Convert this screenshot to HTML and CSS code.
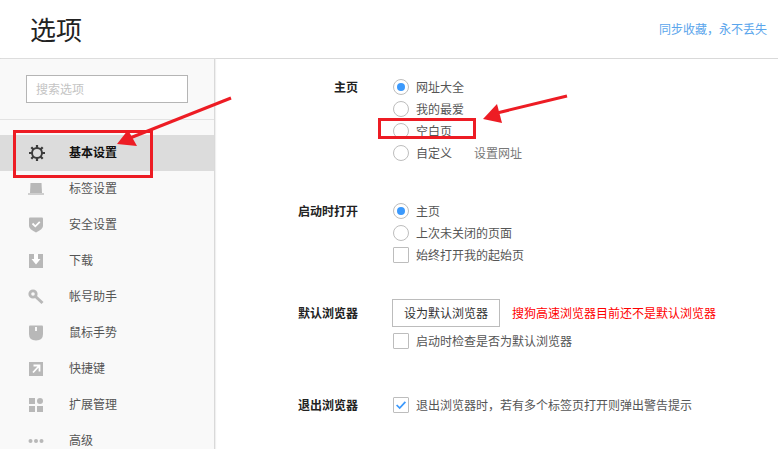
FILE: index.html
```html
<!DOCTYPE html>
<html lang="zh-CN">
<head>
<meta charset="utf-8">
<title>选项</title>
<link rel="stylesheet" href="styles.css">
</head>
<body>
<div class="page">
  <header class="header">
    <h1 class="title">选项</h1>
    <a class="sync">同步收藏，永不丢失</a>
  </header>
  <div class="body">
    <aside class="sidebar">
      <div class="search-wrap"><div class="search">搜索选项</div></div>
      <nav class="nav">
        <div class="nav-item active">
          <svg class="icon" viewBox="0 0 16 16"><circle cx="8" cy="8" r="5" fill="none" stroke="#3c3c3c" stroke-width="2"/><g stroke="#3c3c3c" stroke-width="2.2"><path d="M8 0v3M8 13v3M0 8h3M13 8h3M2.3 2.3l2.1 2.1M11.6 11.6l2.1 2.1M2.3 13.7l2.1-2.1M11.6 4.4l2.1-2.1"/></g></svg>
          <span>基本设置</span>
        </div>
        <div class="nav-item">
          <svg class="icon" viewBox="0 0 16 16"><path d="M2.500 2h11L14 12H2z" fill="#b8b8b8"/><path d="M0 12h16v2H0z" fill="#cfcfcf"/></svg>
          <span>标签设置</span>
        </div>
        <div class="nav-item">
          <svg class="icon" viewBox="0 0 16 16"><path d="M1 1.500q0-1 1-1h12q1 0 1 1V9q0 3-7 6.500Q1 12 1 9z" fill="#b8b8b8"/><path d="M4.500 6.500L7.300 9.300 11.800 4.800" fill="none" stroke="#fff" stroke-width="1.800"/></svg>
          <span>安全设置</span>
        </div>
        <div class="nav-item">
          <svg class="icon" viewBox="0 0 16 16"><path d="M1 1h14v14H1z" fill="#b8b8b8"/><path d="M6 1h4v5h2.500L8 11.500 3.500 6H6z" fill="#fff"/></svg>
          <span>下载</span>
        </div>
        <div class="nav-item">
          <svg class="icon" viewBox="0 0 16 16"><circle cx="5" cy="5" r="3.200" fill="none" stroke="#b8b8b8" stroke-width="2.800"/><path d="M7.500 7.500L14.500 14" stroke="#b8b8b8" stroke-width="3"/></svg>
          <span>帐号助手</span>
        </div>
        <div class="nav-item">
          <svg class="icon" viewBox="0 0 16 16"><path d="M1 1.500q0-1 1-1h12q1 0 1 1V9q0 6.500-7 6.500T1 9z" fill="#b8b8b8"/><path d="M8 2v4" stroke="#fff" stroke-width="1.800"/></svg>
          <span>鼠标手势</span>
        </div>
        <div class="nav-item">
          <svg class="icon" viewBox="0 0 16 16"><path d="M1 1h14v14H1z" fill="#b8b8b8"/><path d="M5.500 4.500h6v6M11 5l-6 6.500" fill="none" stroke="#fff" stroke-width="1.800"/></svg>
          <span>快捷键</span>
        </div>
        <div class="nav-item">
          <svg class="icon" viewBox="0 0 16 16"><path d="M1 1h6v6H1zM1 9h6v6H1zM9 9h6v6H9z" fill="#b8b8b8"/><circle cx="12" cy="4" r="3" fill="#b8b8b8"/></svg>
          <span>扩展管理</span>
        </div>
        <div class="nav-item">
          <svg class="icon" viewBox="0 0 16 16"><circle cx="2.500" cy="8" r="2" fill="#b8b8b8"/><circle cx="8" cy="8" r="2" fill="#b8b8b8"/><circle cx="13.500" cy="8" r="2" fill="#b8b8b8"/></svg>
          <span>高级</span>
        </div>
      </nav>
    </aside>
    <main class="main">
      <section class="section s-home">
        <div class="label">主页</div>
        <div class="controls">
          <div class="row"><i class="radio on"></i><span>网址大全</span></div>
          <div class="row"><i class="radio"></i><span>我的最爱</span></div>
          <div class="row"><i class="radio"></i><span>空白页</span></div>
          <div class="row"><i class="radio"></i><span>自定义</span><span class="link">设置网址</span></div>
        </div>
      </section>
      <section class="section s-start">
        <div class="label">启动时打开</div>
        <div class="controls">
          <div class="row"><i class="radio on"></i><span>主页</span></div>
          <div class="row"><i class="radio"></i><span>上次未关闭的页面</span></div>
          <div class="row"><i class="check"></i><span>始终打开我的起始页</span></div>
        </div>
      </section>
      <section class="section s-default">
        <div class="label label-btn">默认浏览器</div>
        <div class="controls">
          <div class="btn-row"><div class="btn">设为默认浏览器</div><span class="warn">搜狗高速浏览器目前还不是默认浏览器</span></div>
          <div class="row row-tight"><i class="check"></i><span>启动时检查是否为默认浏览器</span></div>
        </div>
      </section>
      <section class="section s-exit">
        <div class="label">退出浏览器</div>
        <div class="controls">
          <div class="row"><i class="check on"><svg viewBox="0 0 16 16"><path d="M3 8l3.500 3.500L13 4.500" fill="none" stroke="#3b99fc" stroke-width="2"/></svg></i><span>退出浏览器时，若有多个标签页打开则弹出警告提示</span></div>
        </div>
      </section>
    </main>
  </div>
  <svg class="annot" viewBox="0 0 778 449">
    <rect x="14.500" y="131.500" width="137" height="45" fill="none" stroke="#ed1c24" stroke-width="3"/>
    <rect x="379.500" y="119.500" width="95" height="18" fill="none" stroke="#ed1c24" stroke-width="3"/>
    <path d="M231 98L130 138" stroke="#ed1c24" stroke-width="3"/>
    <path d="M117 144L128 130 137 146z" fill="#ed1c24"/>
    <path d="M567 96L497 113" stroke="#ed1c24" stroke-width="3"/>
    <path d="M483 119L497 104 502 123z" fill="#ed1c24"/>
  </svg>
</div>
</body>
</html>
```
FILE: styles.css
```css
* { box-sizing: border-box; }
html, body { margin: 0; padding: 0; }
body {
  width: 778px;
  height: 449px;
  overflow: hidden;
  background: #fff;
  font-family: "Noto Sans CJK SC", "Noto Sans", sans-serif;
  font-size: 12px;
  color: #555;
}
.page { position: relative; width: 778px; height: 449px; overflow: hidden; display: flex; flex-direction: column; }
.header {
  height: 59px;
  flex: none;
  border-bottom: 1px solid #d9d9d9;
  display: flex;
  align-items: center;
  justify-content: space-between;
  padding: 0 11px 0 30px;
}
.title { margin: 0; font-size: 26px; font-weight: 400; color: #222; line-height: 1; }
.sync { color: #5aa5ec; font-size: 12px; padding-bottom: 2px; }
.body { display: flex; flex: 1; min-height: 0; }
.sidebar {
  width: 215px;
  flex: none;
  background: #f9f9f9;
  border-right: 1px solid #d9d9d9;
  box-shadow: 1px 0 1px #f0f0f0;
}
.search-wrap { height: 61px; padding: 16px 26px 0; border-bottom: 1px solid #e3e3e3; }
.search {
  width: 162px;
  height: 28px;
  background: #fff;
  border: 1px solid #b5b5b5;
  padding-left: 9px;
  line-height: 25px;
  color: #c4c4c4;
}
.nav { padding-top: 15px; }
.nav-item {
  height: 36px;
  display: flex;
  align-items: center;
  padding-left: 29px;
  gap: 25px;
  color: #555;
}
.nav-item span { padding-bottom: 4px; }
.nav-item.active { background: #dcdcdc; color: #111; font-weight: 700; gap: 24px; }
.icon { width: 16px; height: 16px; flex: none; margin-left: -1px; }
.active .icon { margin-left: 0; }
.main { flex: 1; padding-left: 58px; }
.section { display: flex; }
.s-home { margin-top: 17px; }
.s-start { margin-top: 36px; }
.s-default { margin-top: 33px; }
.s-exit { margin-top: 42px; }
.label {
  width: 85px;
  text-align: right;
  font-weight: 700;
  color: #222;
  line-height: 21px;
  flex: none;
}
.label-btn { line-height: 28px; }
.controls { margin-left: 35px; }
.row { height: 22px; display: flex; align-items: center; gap: 7px; white-space: nowrap; }
.row span { padding-bottom: 2px; }
.radio {
  width: 16px;
  height: 16px;
  border: 1px solid #bdbdbd;
  border-radius: 50%;
  background: #fff;
  flex: none;
  position: relative;
}
.radio.on::after {
  content: "";
  position: absolute;
  left: 3px;
  top: 3px;
  width: 8px;
  height: 8px;
  border-radius: 50%;
  background: #3b99fc;
}
.check {
  width: 16px;
  height: 16px;
  border: 1px solid #bdbdbd;
  border-radius: 1px;
  background: #fff;
  flex: none;
  display: block;
}
.check svg { display: block; width: 14px; height: 14px; }
.link { margin-left: 15px; color: #777; }
.btn-row { display: flex; align-items: center; height: 28px; margin-left: -1px; white-space: nowrap; }
.btn {
  width: 108px;
  height: 28px;
  border: 1px solid #bcbcbc;
  text-align: center;
  line-height: 25px;
  color: #333;
  background: #fff;
}
.warn { color: #f00; margin-left: 12px; padding-bottom: 2px; }
.row-tight { margin-top: 3px; }
.annot { position: absolute; left: 0; top: 0; width: 778px; height: 449px; pointer-events: none; }
```
